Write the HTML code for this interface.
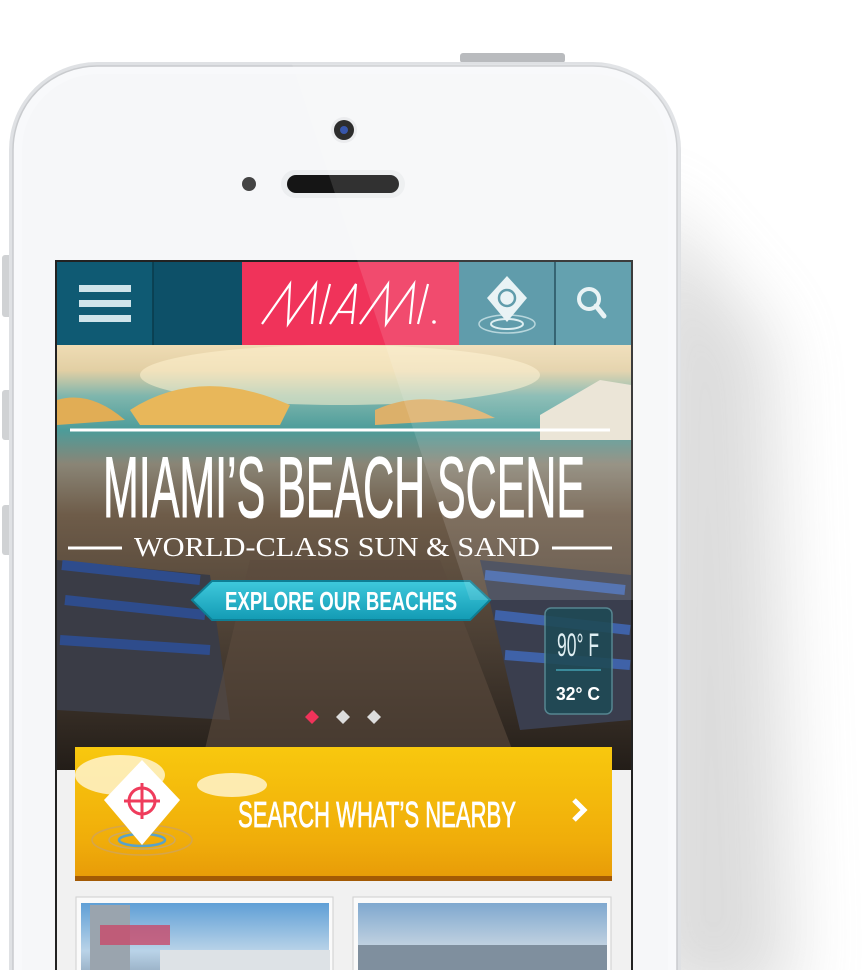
<!DOCTYPE html>
<html><head><meta charset="utf-8"><style>
html,body{margin:0;padding:0;background:#fff;width:862px;height:970px;overflow:hidden}
svg{display:block}
text{font-family:"Liberation Sans",sans-serif}
</style></head><body>
<svg width="862" height="970" viewBox="0 0 862 970" xmlns="http://www.w3.org/2000/svg">
<defs>
<filter id="blur" x="-50%" y="-50%" width="200%" height="200%"><feGaussianBlur stdDeviation="35"/></filter>
<linearGradient id="hero" x1="0" y1="0" x2="0" y2="1">
<stop offset="0" stop-color="#efdcb4"/><stop offset="0.06" stop-color="#e2cfa4"/>
<stop offset="0.12" stop-color="#7fb6ad"/><stop offset="0.2" stop-color="#4c9c9a"/>
<stop offset="0.28" stop-color="#8a8576"/><stop offset="0.4" stop-color="#6e5c49"/>
<stop offset="0.7" stop-color="#4a3e33"/><stop offset="1" stop-color="#231d18"/>
</linearGradient>
<linearGradient id="yel" x1="0" y1="0" x2="0" y2="1">
<stop offset="0" stop-color="#f8c80e"/><stop offset="0.7" stop-color="#f0ad0a"/><stop offset="1" stop-color="#e79a08"/>
</linearGradient>
<linearGradient id="btn" x1="0" y1="0" x2="0" y2="1">
<stop offset="0" stop-color="#3fc9dc"/><stop offset="1" stop-color="#139bb4"/>
</linearGradient>
<linearGradient id="sky" x1="0" y1="0" x2="0" y2="1">
<stop offset="0" stop-color="#5f9fd6"/><stop offset="0.6" stop-color="#b9d3e8"/><stop offset="1" stop-color="#8aa0b6"/>
</linearGradient>
<linearGradient id="sky2" x1="0" y1="0" x2="0" y2="1">
<stop offset="0" stop-color="#7fa8cf"/><stop offset="0.6" stop-color="#c8d6e2"/><stop offset="1" stop-color="#9aa7b3"/>
</linearGradient>
<clipPath id="hc"><rect x="57" y="345" width="574" height="425"/></clipPath>
</defs>
<!-- shadow -->
<path d="M640 190 L770 340 L790 1000 L640 1000 Z" fill="#a8a8a8" opacity="0.4" filter="url(#blur)"/>
<!-- top button -->
<rect x="460" y="53" width="105" height="10" rx="3" fill="#b9bbbe"/>
<!-- side buttons -->
<rect x="2" y="255" width="10" height="62" rx="3" fill="#d0d2d4"/>
<rect x="2" y="390" width="10" height="50" rx="3" fill="#d0d2d4"/>
<rect x="2" y="505" width="10" height="50" rx="3" fill="#d0d2d4"/>
<!-- body -->
<rect x="9" y="62" width="672" height="1000" rx="88" fill="#dfe1e4"/>
<rect x="13" y="66" width="664" height="1000" rx="84" fill="#f8f9fb" stroke="#c9cbce" stroke-width="1.5"/>
<rect x="22" y="74" width="646" height="1000" rx="76" fill="#f6f7f9"/>
<!-- camera/speaker -->
<circle cx="344" cy="130" r="13" fill="#e9eaec"/><circle cx="344" cy="130" r="10" fill="#111"/><circle cx="344" cy="130" r="4" fill="#1c3fa0"/>
<circle cx="249" cy="184" r="7" fill="#444"/>
<rect x="281" y="170" width="124" height="28" rx="14" fill="#eceef0"/>
<rect x="287" y="175" width="112" height="18" rx="9" fill="#151515"/>
<!-- screen bg -->
<rect x="55" y="260" width="578" height="720" fill="#222"/>
<rect x="57" y="770" width="574" height="210" fill="#f1f1f1"/>
<!-- header -->
<rect x="57" y="262" width="96" height="83" fill="#0f5a73"/>
<rect x="153" y="262" width="89" height="83" fill="#0d5068"/>
<rect x="242" y="262" width="217" height="83" fill="#f0335a"/>
<rect x="459" y="262" width="96" height="83" fill="#4a8fa0"/>
<rect x="555" y="262" width="76" height="83" fill="#4f94a4"/>
<g stroke="#0a3a4a" stroke-width="1.5"><line x1="153" y1="262" x2="153" y2="345"/><line x1="555" y1="262" x2="555" y2="345"/></g>
<g fill="#cfe4ea"><rect x="79" y="285" width="52" height="7"/><rect x="79" y="300" width="52" height="7"/><rect x="79" y="315" width="52" height="7"/></g>
<g fill="none" stroke="#fff" stroke-width="2.2" stroke-linejoin="miter">
<path d="M262 324 L290 284 L288 324 L316 284 L312 324"/>
<path d="M330 284 L320 324"/>
<path d="M330 324 L356 284 L352 324 M337 312 L353 312"/>
<path d="M360 324 L388 284 L386 324 L414 284 L410 324"/>
<path d="M428 284 L418 324"/>
</g>
<circle cx="434" cy="322" r="1.8" fill="#fff"/>
<!-- location icon -->
<g transform="translate(507,298)">
<ellipse cx="0" cy="26" rx="28" ry="9" fill="none" stroke="#d9ecef" stroke-width="1.5" opacity="0.7"/>
<ellipse cx="0" cy="26" rx="16" ry="5" fill="none" stroke="#d9ecef" stroke-width="2"/>
<path d="M0 -22 L20 0 L0 24 L-20 0 Z" fill="#e6f2f4"/>
<circle cx="0" cy="0" r="8" fill="none" stroke="#4a8fa0" stroke-width="2.5"/>
</g>
<circle cx="589" cy="299" r="10" fill="none" stroke="#e6f2f4" stroke-width="4"/>
<line x1="596" y1="306" x2="604" y2="316" stroke="#e6f2f4" stroke-width="5" stroke-linecap="round"/>
<!-- hero -->
<g clip-path="url(#hc)">
<rect x="57" y="345" width="574" height="425" fill="url(#hero)"/>
<ellipse cx="340" cy="375" rx="200" ry="30" fill="#fff3d0" opacity="0.55"/>
<path d="M130 410 Q200 365 290 405 L280 425 L140 425 Z" fill="#e8b75a"/>
<path d="M57 400 Q90 390 125 420 L57 425Z" fill="#e1ad55"/>
<path d="M375 410 Q430 385 495 418 L375 425Z" fill="#dcb06a"/>
<path d="M540 415 L600 380 L631 385 L631 440 L540 440Z" fill="#e9e2d2"/>
<path d="M57 560 L210 575 L230 720 L57 710Z" fill="#3a3c46"/>
<path d="M62 565 L200 580 M65 600 L205 615 M60 640 L210 650" stroke="#2e4c8c" stroke-width="10"/>
<path d="M480 560 L631 575 L631 720 L520 730Z" fill="#3a3e4e"/>
<path d="M485 575 L625 590 M495 615 L630 630 M505 655 L630 665" stroke="#3f62a8" stroke-width="10"/>
<path d="M250 560 L440 560 L520 770 L200 770Z" fill="#5b4b3d" opacity="0.6"/>
</g>
<line x1="70" y1="430" x2="610" y2="430" stroke="#fff" stroke-width="3"/>
<text x="344" y="517" fill="#fff" stroke="#fff" stroke-width="1" font-size="86" text-anchor="middle" textLength="482" lengthAdjust="spacingAndGlyphs">MIAMI’S BEACH SCENE</text>
<line x1="68" y1="548" x2="122" y2="548" stroke="#fff" stroke-width="3"/>
<line x1="552" y1="548" x2="612" y2="548" stroke="#fff" stroke-width="3"/>
<text x="337" y="556" fill="#fff" font-size="27" text-anchor="middle" textLength="406" lengthAdjust="spacingAndGlyphs" style="font-family:'Liberation Serif',serif">WORLD-CLASS SUN &amp; SAND</text>
<path d="M192 600 L212 581 L470 581 L490 600 L470 620 L212 620 Z" fill="url(#btn)" stroke="#0e7f95" stroke-width="2"/>
<text x="341" y="610" fill="#fff" font-size="26" font-weight="bold" text-anchor="middle" textLength="232" lengthAdjust="spacingAndGlyphs">EXPLORE OUR BEACHES</text>
<rect x="545" y="608" width="67" height="106" rx="6" fill="#1f4a55" opacity="0.9" stroke="#5a8d98" stroke-width="1.5"/>
<text x="578" y="656" fill="#dfeef2" font-size="32" text-anchor="middle" textLength="42" lengthAdjust="spacingAndGlyphs">90° F</text>
<line x1="556" y1="670" x2="601" y2="670" stroke="#3a8a9a" stroke-width="2"/>
<text x="578" y="700" fill="#fff" font-size="18" font-weight="bold" text-anchor="middle" textLength="44" lengthAdjust="spacingAndGlyphs">32° C</text>
<path d="M312 710 L319 717 L312 724 L305 717Z" fill="#f0335a"/>
<path d="M343 710 L350 717 L343 724 L336 717Z" fill="#ddd"/>
<path d="M374 710 L381 717 L374 724 L367 717Z" fill="#ddd"/>
<!-- search banner -->
<rect x="75" y="747" width="537" height="134" fill="url(#yel)"/>
<rect x="75" y="876" width="537" height="5" fill="#a35a05"/>
<ellipse cx="120" cy="775" rx="45" ry="20" fill="#fff6da" opacity="0.8"/>
<ellipse cx="232" cy="785" rx="35" ry="12" fill="#fff6da" opacity="0.8"/>
<ellipse cx="142" cy="840" rx="50" ry="15" fill="none" stroke="#d6a54a" stroke-width="1.5"/>
<ellipse cx="142" cy="840" rx="33" ry="9" fill="none" stroke="#cda860" stroke-width="1.5"/>
<ellipse cx="142" cy="840" rx="23" ry="6" fill="none" stroke="#5aa2c8" stroke-width="2.5"/>
<path d="M142 760 L180 800 L142 845 L104 800Z" fill="#fff"/>
<circle cx="142" cy="801" r="13" fill="none" stroke="#ef3c5c" stroke-width="3"/>
<path d="M142 783 V819 M124 801 H160" stroke="#ef3c5c" stroke-width="3"/>
<text x="377" y="827" fill="#fff" stroke="#fff" stroke-width="0.8" font-size="36" text-anchor="middle" textLength="278" lengthAdjust="spacingAndGlyphs">SEARCH WHAT’S NEARBY</text>
<path d="M574 800 L584 810 L574 820" fill="none" stroke="#fff" stroke-width="5"/>
<!-- thumbnails -->
<rect x="76" y="897" width="257" height="90" fill="#fafafa" stroke="#cfcfcf"/>
<rect x="81" y="903" width="248" height="80" fill="url(#sky)"/>
<rect x="90" y="905" width="40" height="70" fill="#9aa4ae"/>
<rect x="100" y="925" width="70" height="20" fill="#c84a6a" opacity="0.8"/>
<rect x="160" y="950" width="170" height="30" fill="#dde2e6"/>
<rect x="353" y="897" width="258" height="90" fill="#fafafa" stroke="#cfcfcf"/>
<rect x="358" y="903" width="249" height="80" fill="url(#sky2)"/>
<rect x="358" y="945" width="249" height="30" fill="#7f8f9e"/>
<!-- glare -->
<polygon points="292,64 680,64 680,600 470,600" fill="#fff" opacity="0.12"/>
</svg>
</body></html>
